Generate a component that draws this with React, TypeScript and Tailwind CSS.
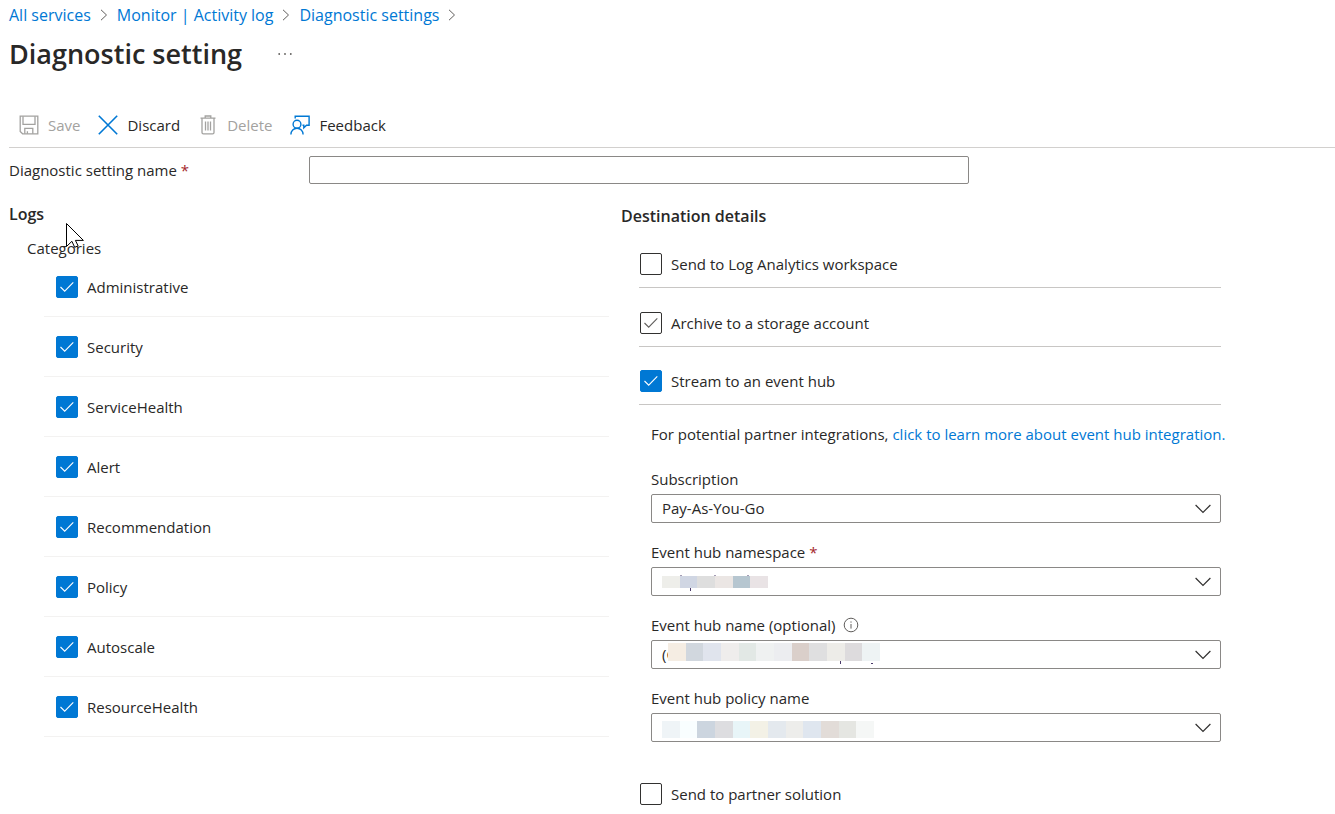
import { useState } from "react";
import type { ReactNode } from "react";

const categories = [
  "Administrative",
  "Security",
  "ServiceHealth",
  "Alert",
  "Recommendation",
  "Policy",
  "Autoscale",
  "ResourceHealth",
];

const crumbs = ["All services", "Monitor | Activity log", "Diagnostic settings"];

const namespaceMask = ["bg-[#eeeeea]", "bg-[#d0d6e3]", "bg-[#dedede]", "bg-[#ebe6e4]", "bg-[#b6c6d0]", "bg-[#e9e3e5]"];

const hubNameMask = [
  "bg-[#f5ede3]",
  "bg-[#d1d7de]",
  "bg-[#e0e4ed]",
  "bg-[#efedec]",
  "bg-[#e2e8e5]",
  "bg-[#eff1f1]",
  "bg-[#ecedf0]",
  "bg-[#dacfca]",
  "bg-[#dfdfe0]",
  "bg-[#edece8]",
  "bg-[#dddbdd]",
  "bg-[#eef3f4]",
];

const policyMask = [
  "bg-[#eff4f7]",
  "bg-[#f9feff]",
  "bg-[#ccd5df]",
  "bg-[#dddde0]",
  "bg-[#e8f5f8]",
  "bg-[#f3f1e6]",
  "bg-[#e4e9ee]",
  "bg-[#ededeb]",
  "bg-[#dfe6ef]",
  "bg-[#e2dcd8]",
  "bg-[#e5e6e2]",
  "bg-[#f5f7f6]",
];

function ChevronRight() {
  return (
    <svg className="h-3 w-2" viewBox="0 0 8 12" fill="none" stroke="#605e5c" aria-hidden="true">
      <path d="M1 .8 6.5 6 1 11.2" />
    </svg>
  );
}

function SaveIcon() {
  return (
    <svg className="h-5 w-5" viewBox="0 0 20 20" fill="none" stroke="#a3a2a0" strokeWidth="1.3" aria-hidden="true">
      <path d="M1.2 1.2h17.6v17.6H3.6l-2.4-2.4z" />
      <path d="M4 1.2v8.2h12V1.2M5.8 18.8v-5.4h8v5.4M8.4 18.8v-2.6" />
    </svg>
  );
}

function DiscardIcon() {
  return (
    <svg className="h-5 w-5" viewBox="0 0 20 20" fill="none" stroke="#0078d4" strokeWidth="1.6" aria-hidden="true">
      <path d="m.8.8 18.4 18.4M19.2.8.8 19.2" />
    </svg>
  );
}

function DeleteIcon() {
  return (
    <svg className="h-5 w-5" viewBox="0 0 20 20" fill="none" stroke="#a3a2a0" strokeWidth="1.3" aria-hidden="true">
      <path d="M2.5 3.2h15M7.2 3V1h5.6v2M4 3.2v14.2c0 1 .4 1.4 1.4 1.4h9.2c1 0 1.4-.4 1.4-1.4V3.2" />
      <path d="M7.5 6.4v9.2M10 6.4v9.2M12.5 6.4v9.2" />
    </svg>
  );
}

function FeedbackIcon() {
  return (
    <svg className="h-5 w-5" viewBox="0 0 20 20" fill="none" stroke="#0078d4" strokeWidth="1.4" aria-hidden="true">
      <path d="M5.2 3.4V1.2h13.9v9h-2.6l-2.7 2.6v-2.6h-1.3" />
      <circle cx="7" cy="9.2" r="3.9" />
      <path d="M.9 19.6c0-3.6 2.7-6.3 6.1-6.3s6.1 2.7 6.1 6.3" />
    </svg>
  );
}

function Required() {
  return <span className="text-[#a4262c]">*</span>;
}

function CheckRow({ label, checked, muted = false }: { label: string; checked: boolean; muted?: boolean }) {
  const [on, setOn] = useState(checked);
  const box = on && !muted ? "border-[#0078d4] bg-[#0078d4]" : "border-[#323130] bg-white";
  return (
    <label className="flex items-center gap-[9px]">
      <span className="relative flex">
        <input
          type="checkbox"
          checked={on}
          onChange={() => setOn(!on)}
          className={`h-[22px] w-[22px] appearance-none rounded-xs border ${box}`}
        />
        {on && (
          <svg
            className="pointer-events-none absolute inset-0 h-[22px] w-[22px]"
            viewBox="0 0 22 22"
            fill="none"
            stroke={muted ? "#605e5c" : "#fff"}
            strokeWidth="1.1"
            aria-hidden="true"
          >
            <path d="m4.5 11 4.2 4.2 8.6-8.8" />
          </svg>
        )}
      </span>
      {label}
    </label>
  );
}

function Mask({ colors, className }: { colors: string[]; className: string }) {
  return (
    <span className={`pointer-events-none absolute flex ${className}`} aria-hidden="true">
      {colors.map((c) => (
        <span key={c} className={`flex-1 ${c}`} />
      ))}
    </span>
  );
}

// ends of the strokes that stick out around a mask
function Strokes({ d }: { d: string }) {
  return (
    <svg
      className="pointer-events-none absolute top-0 left-0 h-[29px] w-60"
      viewBox="0 0 240 29"
      stroke="#4a3a6a"
      aria-hidden="true"
    >
      <path d={d} />
    </svg>
  );
}

interface SelectFieldProps {
  id: string;
  label: ReactNode;
  value?: string;
  children?: ReactNode;
}

function SelectField({ id, label, value = "", children }: SelectFieldProps) {
  return (
    <div>
      <label htmlFor={id} className="flex h-6 items-center gap-1">
        {label}
      </label>
      <div className="relative mt-[3px]">
        <select
          id={id}
          className="block h-[29px] w-full appearance-none rounded-xs border border-[#8a8886] bg-white px-[10px] pb-px leading-5"
        >
          <option>{value}</option>
        </select>
        {children}
        <svg
          className="pointer-events-none absolute top-[10px] right-[10px] h-[10px] w-4"
          viewBox="0 0 16 10"
          fill="none"
          stroke="#323130"
          strokeWidth="1.2"
          aria-hidden="true"
        >
          <path d="m.6 1 7.4 7.4L15.4 1" />
        </svg>
      </div>
    </div>
  );
}

export default function App() {
  const [name, setName] = useState("");

  return (
    <div className="relative bg-white pl-[9px] font-['Open_Sans',sans-serif] text-[15px] leading-6 text-[#292827]">
      <nav className="flex h-[30px] items-center gap-[9px] text-base" aria-label="Breadcrumb">
        {crumbs.map((c) => (
          <span key={c} className="flex items-center gap-[9px]">
            <a href="#" className="text-[#0078d4]">{c}</a>
            <ChevronRight />
          </span>
        ))}
      </nav>

      <header className="flex h-12 items-center gap-9">
        <h1 className="text-[27px] leading-9 font-semibold">Diagnostic setting</h1>
        <button type="button" aria-label="More options">
          <svg className="h-1 w-[14px]" viewBox="0 0 14 4" fill="#605e5c" aria-hidden="true">
            <circle cx="1.2" cy="2" r=".9" />
            <circle cx="7" cy="2" r=".9" />
            <circle cx="12.8" cy="2" r=".9" />
          </svg>
        </button>
      </header>

      <div className="mt-6 flex h-[46px] items-center gap-[18px] border-b border-[#d2d0ce] pl-[10px]">
        <button type="button" disabled className="flex items-center gap-[9px] text-[#a3a2a0]">
          <SaveIcon /> Save
        </button>
        <button type="button" className="flex items-center gap-[9px]">
          <DiscardIcon /> Discard
        </button>
        <button type="button" disabled className="flex items-center gap-[9px] text-[#a3a2a0]">
          <DeleteIcon /> Delete
        </button>
        <button type="button" className="flex items-center gap-[9px]">
          <FeedbackIcon /> Feedback
        </button>
      </div>

      <div className="mt-2 flex items-center">
        <label htmlFor="setting-name" className="w-[300px]">
          Diagnostic setting name <Required />
        </label>
        <input
          id="setting-name"
          type="text"
          value={name}
          onChange={(e) => setName(e.target.value)}
          className="h-7 max-w-[660px] flex-1 rounded-xs border border-[#8a8886] px-2"
        />
      </div>

      <main className="mt-[18px] grid max-w-[1212px] grid-cols-2 gap-3">
        <section>
          <h2 className="text-base leading-6 font-semibold">Logs</h2>
          <h3 className="mt-[10px] pl-[18px]">Categories</h3>
          <ul className="-mt-[3px] pl-[35px]">
            {categories.map((c) => (
              <li key={c} className="flex h-[60px] items-center border-b border-[#f3f2f1] pl-3">
                <CheckRow label={c} checked />
              </li>
            ))}
          </ul>
        </section>

        <section>
          <h2 className="text-base leading-7 font-semibold">Destination details</h2>
          <div className="pl-[18px]">
            <div className="flex h-[58px] items-end border-b border-[#c8c6c4] pb-[11px] pl-px">
              <CheckRow label="Send to Log Analytics workspace" checked={false} />
            </div>
            <div className="flex h-[59px] items-end border-b border-[#c8c6c4] pb-[11px] pl-px">
              <CheckRow label="Archive to a storage account" checked muted />
            </div>
            <div className="flex h-[58px] items-end border-b border-[#c8c6c4] pb-[11px] pl-px">
              <CheckRow label="Stream to an event hub" checked />
            </div>

            <div className="pt-[17px] pl-3">
              <p className="whitespace-nowrap">
                For potential partner integrations,{" "}
                <a href="#" className="text-[#0078d4]">click to learn more about event hub integration.</a>
              </p>
              <div className="mt-[21px] flex flex-col gap-[17px]">
                <SelectField id="subscription" label="Subscription" value="Pay-As-You-Go" />
                <SelectField id="namespace" label={<>Event hub namespace <Required /></>}>
                  <Strokes d="M30 8v2M64 8v2M97 8v2M39.5 20v4" />
                  <Mask colors={namespaceMask} className="top-[9px] left-[11px] h-3 w-[106px]" />
                </SelectField>
                <SelectField
                  id="hub-name"
                  value="(C"
                  label={
                    <>
                      Event hub name (optional)
                      <svg className="ml-1 h-4 w-4" viewBox="0 0 16 16" fill="none" stroke="#605e5c" aria-hidden="true">
                        <circle cx="8" cy="8" r="6.8" />
                        <path d="M8 7v4.6M8 4.4v1.3" />
                      </svg>
                    </>
                  }
                >
                  <Strokes d="M189.5 21v3M220 23.5h2" />
                  <Mask colors={hubNameMask} className="top-[3px] left-[17px] h-[18px] w-[212px]" />
                </SelectField>
                <SelectField id="policy" label="Event hub policy name">
                  <Mask colors={policyMask} className="top-2 left-[11px] h-[17px] w-[212px]" />
                </SelectField>
              </div>
            </div>

            <div className="mt-10 flex pl-px">
              <CheckRow label="Send to partner solution" checked={false} />
            </div>
          </div>
        </section>
      </main>

      {/* mouse pointer */}
      <svg
        className="pointer-events-none absolute top-[222px] left-[65px] h-7 w-5"
        viewBox="0 0 20 28"
        fill="#fff"
        stroke="#000"
        aria-hidden="true"
      >
        <path d="M1.5 1.5v23l5.4-5.2 2.8 6 3.4-1.5-2.7-5.4h8z" />
      </svg>
    </div>
  );
}
